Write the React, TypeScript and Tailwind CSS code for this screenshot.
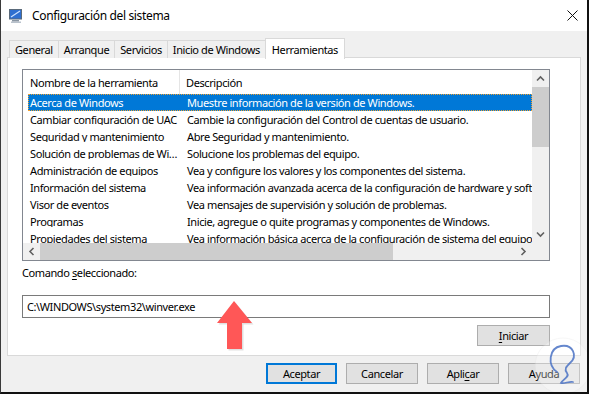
import React from "react";

const rows: [string, string][] = [
  ["Acerca de Windows", "Muestre información de la versión de Windows."],
  ["Cambiar configuración de UAC", "Cambie la configuración del Control de cuentas de usuario."],
  ["Seguridad y mantenimiento", "Abre Seguridad y mantenimiento."],
  ["Solución de problemas de Windows", "Solucione los problemas del equipo."],
  ["Administración de equipos", "Vea y configure los valores y los componentes del sistema."],
  ["Información del sistema", "Vea información avanzada acerca de la configuración de hardware y software del equipo."],
  ["Visor de eventos", "Vea mensajes de supervisión y solución de problemas."],
  ["Programas", "Inicie, agregue o quite programas y componentes de Windows."],
  ["Propiedades del sistema", "Vea información básica acerca de la configuración de sistema del equipo."],
];

const tabs = ["General", "Arranque", "Servicios", "Inicio de Windows"];

function Chevron({ dir }: { dir: "up" | "down" | "left" | "right" }) {
  const rot = { up: 0, down: 180, left: -90, right: 90 }[dir];
  return (
    <svg width="9" height="9" viewBox="0 0 9 9" style={{ transform: `rotate(${rot}deg)` }}>
      <path d="M1 6.5 L4.5 3 L8 6.5" fill="none" stroke="#606060" strokeWidth="1.6" />
    </svg>
  );
}

export default function App() {
  return (
    <div
      className="w-[589px] h-[394px] bg-[#f0f0f0] border-l border-l-[#3a3a3a] border-r-2 border-r-[#111] border-b-2 border-b-[#111] flex flex-col relative overflow-hidden text-[11px] tracking-[-0.4px] text-black leading-none"
      style={{ fontFamily: "'Noto Sans', sans-serif" }}
    >
      {/* Title bar */}
      <div className="h-[31px] bg-white flex items-center shrink-0">
        <svg width="16" height="16" viewBox="0 0 16 16" className="ml-[7px] mr-[8px]">
          <rect x="1.5" y="1.5" width="12" height="9.5" fill="#2f6fd0" stroke="#5a6a7a" />
          <path d="M3 9 L12 3" stroke="#cfe3ff" strokeWidth="1.2" />
          <rect x="4" y="12" width="7" height="1.6" fill="#8a96a3" />
          <rect x="3" y="13.5" width="10" height="1.5" fill="#b9c2cc" />
        </svg>
        <span className="text-[12px] tracking-[-0.35px] text-black">Configuración del sistema</span>
        <svg width="11" height="11" viewBox="0 0 11 11" className="ml-auto mr-[9px]">
          <path d="M0.5 0.5 L10.5 10.5 M10.5 0.5 L0.5 10.5" stroke="#111" strokeWidth="1" />
        </svg>
      </div>

      {/* Body */}
      <div className="flex flex-col pl-[6px] pr-[6px] pt-[7px]">
        {/* Tabs */}
        <div className="flex items-end h-[20px] pl-[2px] relative z-10">
          {tabs.map((t, i) => (
            <div
              key={t}
              className={`h-[18px] px-[5px] flex items-center border-t border-[#d9d9d9] border-r ${i === 0 ? "border-l" : ""} bg-[#f0f0f0]`}
            >
              {t}
            </div>
          ))}
          <div className="h-[21px] -mb-[1px] px-[6px] flex items-center bg-white border border-b-0 border-[#d9d9d9] -ml-[1px]">
            Herramientas
          </div>
        </div>

        {/* Panel */}
        <div className="w-[574px] h-[299px] bg-white border border-[#d9d9d9] -mt-[1px] pl-[14px] pt-[11px] flex flex-col">
          {/* List view */}
          <div className="w-[528px] h-[192px] border border-[#828790] flex flex-col">
            <div className="flex h-[173px]">
              <div className="w-[509px] h-[173px] overflow-hidden flex flex-col">
                <div className="h-[24px] flex items-center shrink-0">
                  <div className="w-[157px] h-full flex items-center pl-[7px] border-r border-[#e5e5e5]">
                    Nombre de la herramienta
                  </div>
                  <div className="pl-[6px]">Descripción</div>
                </div>
                {rows.map(([n, d], i) => (
                  <div
                    key={n}
                    className={`h-[17px] shrink-0 flex items-center ml-[5px] w-[504px] ${
                      i === 0 ? "bg-[#0078d7] text-white outline outline-1 outline-dotted outline-offset-[-1px] outline-[#f0a030]" : ""
                    }`}
                  >
                    <div className="w-[150px] pl-[2px] whitespace-nowrap overflow-hidden text-ellipsis shrink-0">{n}</div>
                    <div className="pl-[9px] whitespace-nowrap">{d}</div>
                  </div>
                ))}
              </div>
              {/* vertical scrollbar */}
              <div className="w-[17px] h-[173px] bg-[#f0f0f0] flex flex-col items-center">
                <div className="h-[17px] flex items-center justify-center">
                  <Chevron dir="up" />
                </div>
                <div className="w-[17px] h-[60px] bg-[#cdcdcd]" />
                <div className="flex-1" />
                <div className="h-[17px] flex items-center justify-center">
                  <Chevron dir="down" />
                </div>
              </div>
            </div>
            {/* horizontal scrollbar */}
            <div className="flex h-[17px]">
              <div className="w-[509px] bg-[#f0f0f0] flex items-center">
                <div className="w-[17px] h-[17px] flex items-center justify-center">
                  <Chevron dir="left" />
                </div>
                <div className="w-[353px] h-[17px] bg-[#cdcdcd]" />
                <div className="flex-1" />
                <div className="w-[17px] h-[17px] flex items-center justify-center">
                  <Chevron dir="right" />
                </div>
              </div>
              <div className="w-[17px] bg-[#f0f0f0]" />
            </div>
          </div>

          <div className="mt-[6px] h-[13px]">
            Comando <span className="underline underline-offset-2">s</span>eleccionado:
          </div>

          <div className="mt-[15px] w-[528px] h-[23px] border border-[#7a7a7a] flex items-center pl-[4px]">
            C:\WINDOWS\system32\winver.exe
          </div>

          <div className="mt-[7px] w-[528px] flex justify-end">
            <div className="w-[73px] h-[21px] bg-[#e1e1e1] border border-[#adadad] flex items-center justify-center">
              <span>
                <span className="underline underline-offset-2">I</span>niciar
              </span>
            </div>
          </div>
        </div>

        {/* Bottom buttons */}
        <div className="flex justify-end gap-[9px] mt-[7px] pr-[1px]">
          <div className="w-[71px] h-[21px] bg-[#e1e1e1] border-2 border-[#0078d7] flex items-center justify-center">
            Aceptar
          </div>
          <div className="w-[72px] h-[21px] bg-[#e1e1e1] border border-[#adadad] flex items-center justify-center">
            Cancelar
          </div>
          <div className="w-[72px] h-[21px] bg-[#e1e1e1] border border-[#adadad] flex items-center justify-center">
            <span>
              Apli<span className="underline underline-offset-2">c</span>ar
            </span>
          </div>
          <div className="w-[72px] h-[21px] bg-[#e1e1e1] border border-[#adadad] flex items-center justify-center">
            Ayuda
          </div>
        </div>
      </div>

      {/* Red arrow annotation */}
      <svg className="absolute left-[212px] top-[298px]" width="44" height="54" viewBox="0 0 44 54">
        <path d="M21 3 L39 25 L29 25 L29 51 L14 51 L14 25 L4 25 Z" fill="#000" opacity="0.12" transform="translate(1.5,1.5)" />
        <path d="M21 3 L39 25 L29 25 L29 51 L14 51 L14 25 L4 25 Z" fill="#ff5757" />
      </svg>

      {/* Watermark */}
      <svg className="absolute left-[532px] top-[336px]" width="60" height="60" viewBox="0 0 60 60">
        <circle cx="30" cy="30" r="28" fill="#ffffff" opacity="0.3" stroke="#e6e6e6" />
        <path
          d="M24 36 C14 29 16 12 28 10 C40 8 45 20 37 27 C33 31 31 33 34 37 C37 41 30 43 28 47 C32 48 36 45 40 46"
          fill="none"
          stroke="#4a72c4"
          strokeOpacity="0.85"
          strokeWidth="1.8"
          strokeLinecap="round"
        />
      </svg>
    </div>
  );
}
